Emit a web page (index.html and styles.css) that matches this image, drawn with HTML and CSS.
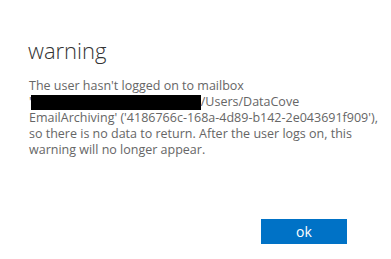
FILE: index.html
```html
<!DOCTYPE html>
<html lang="en">
<head>
  <meta charset="UTF-8">
  <meta name="viewport" content="width=device-width, initial-scale=1.0">
  <title>warning</title>
  <link rel="stylesheet" href="styles.css">
</head>

<body>
  <section class="dialog">
    <h1 class="title">warning</h1>

    <!-- message, redacted part kept as a black bar -->
    <p class="message">
      The user hasn't logged on to mailbox<br>
      '<span class="redact"></span>/Users/DataCove<br>
      EmailArchiving' ('4186766c-168a-4d89-b142-2e043691f909'),<br>
      so there is no data to return. After the user logs on, this<br>
      warning will no longer appear.
    </p>

    <div class="buttons">
      <button class="ok" type="button">ok</button>
    </div>
  </section>
</body>
</html>
```

FILE: styles.css
```css
* {margin:0; padding:0;}

body{
  background: #fff;
  font-family: "Open Sans", "Noto Sans", sans-serif;
}

.dialog{
  width: 391px;
  height: 259px;
  box-sizing: border-box;
  padding: 37px 44px 0 28px;
}

.title{
  font-size: 22px;
  font-weight: 300;
  color: #333;
  line-height: 26px;
}

.message{
  margin-top: 15px;
  padding-left: 1px;
  font-size: 12.5px;
  line-height: 16px;
  color: #666;
  white-space: nowrap;
}

.redact{
  display: inline-block;
  width: 170px;
  height: 15px;
  margin-left: -1px;
  background: #000;
  vertical-align: -4px;
}

.buttons{
  display: flex;
  justify-content: flex-end;
  margin-top: 61px;
}

.ok{
  width: 86px;
  height: 25px;
  border: none;
  background: #0072c6;
  color: #fff;
  font-family: "Open Sans", "Noto Sans", sans-serif;
  font-size: 14px;
  line-height: 25px;
}
```
